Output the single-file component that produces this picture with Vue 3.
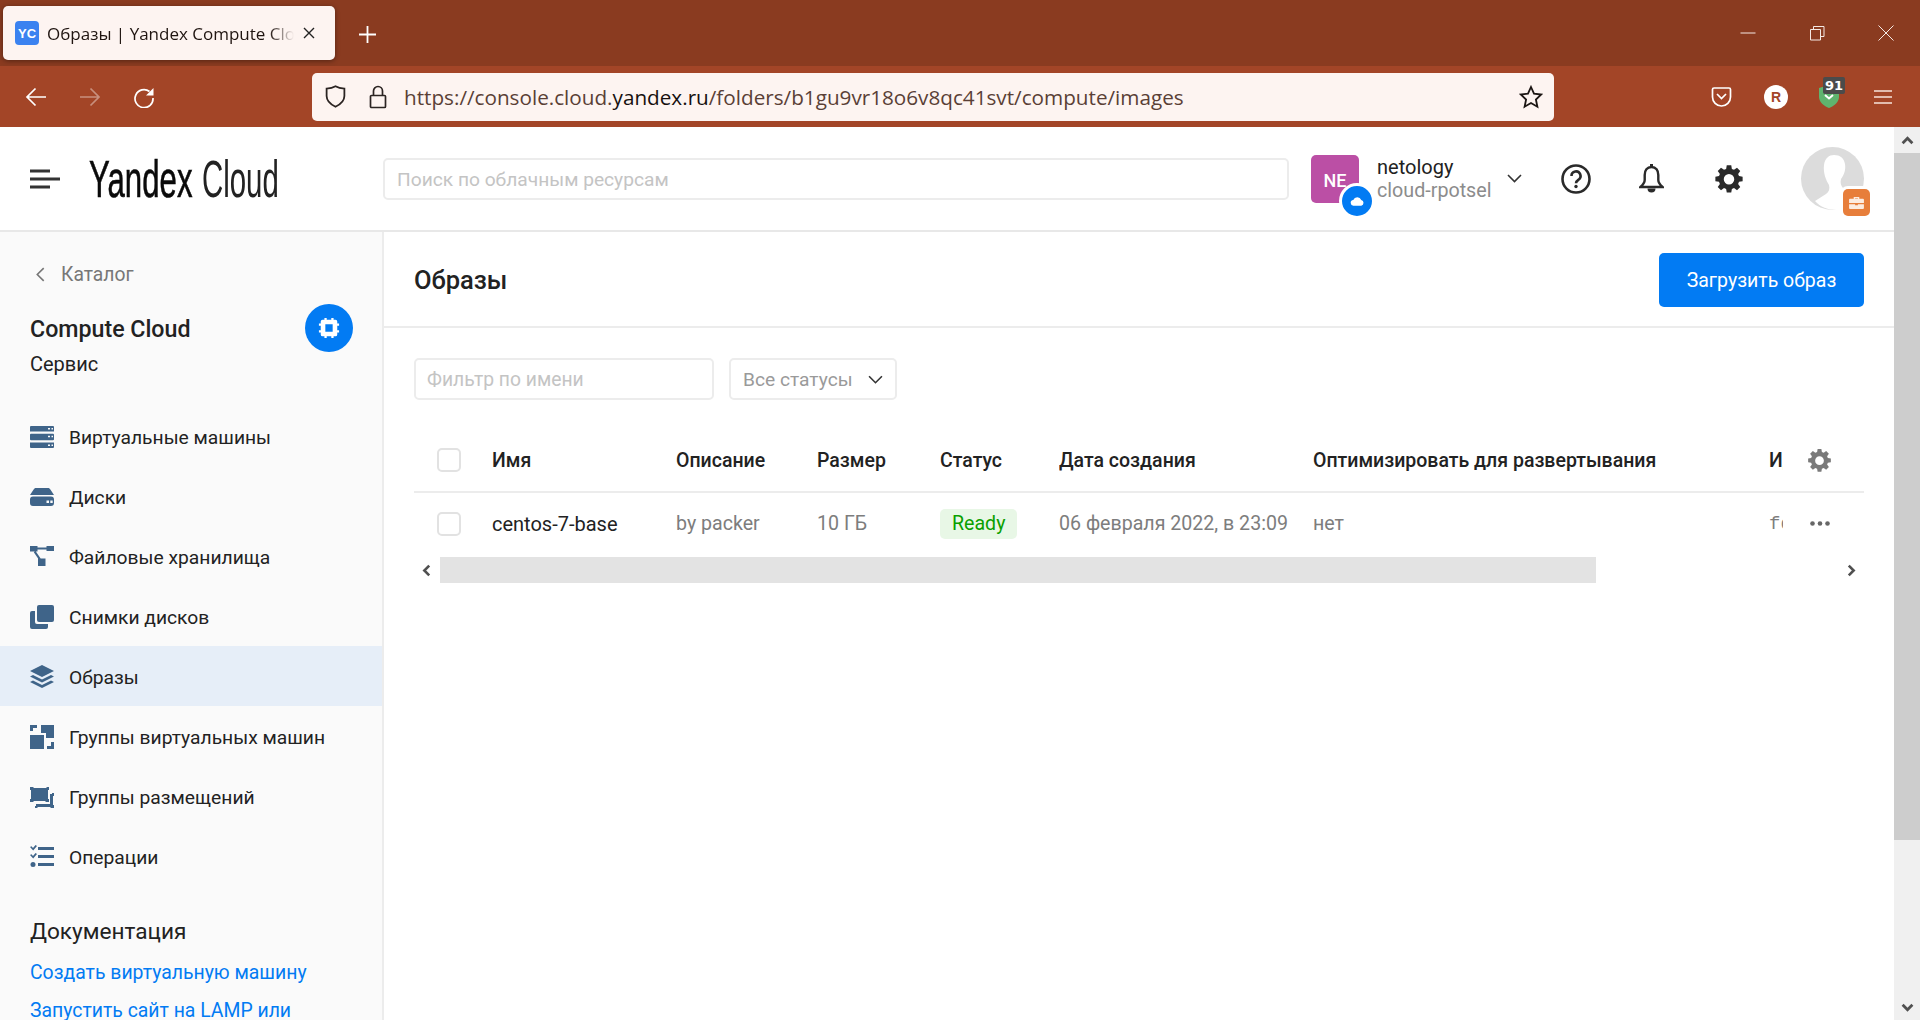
<script setup>
const nav = [
  { label: 'Виртуальные машины', icon: 'vm' },
  { label: 'Диски', icon: 'disk' },
  { label: 'Файловые хранилища', icon: 'fs' },
  { label: 'Снимки дисков', icon: 'snap' },
  { label: 'Образы', icon: 'img', active: true },
  { label: 'Группы виртуальных машин', icon: 'grp' },
  { label: 'Группы размещений', icon: 'plc' },
  { label: 'Операции', icon: 'ops' },
]
const gearPath = 'M10.2 1h3.6l.5 2.9 1.7.7 2.4-1.7 2.6 2.6-1.7 2.4.7 1.7 2.9.5v3.6l-2.9.5-.7 1.7 1.7 2.4-2.6 2.6-2.4-1.7-1.7.7-.5 2.9h-3.6l-.5-2.9-1.7-.7-2.4 1.7-2.6-2.6 1.7-2.4-.7-1.7-2.9-.5v-3.6l2.9-.5.7-1.7-1.7-2.4 2.6-2.6 2.4 1.7 1.7-.7zM12 8a4.2 4.2 0 1 0 0 8.400a4.200 4.200 0 0 0 0-8.400z'
</script>

<template>
  <div class="window">
    <div class="tabbar">
      <div class="tab">
        <span class="favicon">YC</span>
        <span class="tab-title">Образы | Yandex Compute Cloud</span>
        <svg class="tab-x" viewBox="0 0 12 12"><path d="M1 1l10 10M11 1L1 11" /></svg>
      </div>
      <svg class="newtab" viewBox="0 0 16 16"><path d="M8 0v16M0 8h16" /></svg>
      <div class="winctl">
        <svg viewBox="0 0 16 16"><path d="M.5 8h15" /></svg>
        <svg viewBox="0 0 16 16"><path d="M1.500 4.500h10v10.500h-10zM4.500 4.500V1.500h10.500v10h-3.500" /></svg>
        <svg viewBox="0 0 16 16"><path d="M.5.5l15 15M15.500.5l-15 15" /></svg>
      </div>
    </div>

    <div class="toolbar">
      <div class="tool-left">
        <svg viewBox="0 0 22 22"><path d="M21 11H2M10.500 2.500L2 11l8.500 8.500" /></svg>
        <svg class="dim" viewBox="0 0 22 22"><path d="M1 11h19M11.500 2.500L20 11l-8.500 8.500" /></svg>
        <svg viewBox="0 0 22 22"><path d="M16.500 5.500A9 9 0 1 0 20 12" /><path class="solid" d="M20.500 2v7.500H13z" /></svg>
      </div>
      <div class="urlbar">
        <svg class="url-shield" viewBox="0 0 20 22"><path d="M10 1.200c2.500 1.400 5 2 8.500 2.300v7c0 5-3.800 8-8.500 10.300C5.300 18.500 1.500 15.500 1.500 10.500v-7C5 3.200 7.500 2.600 10 1.200z" /></svg>
        <svg class="url-lock" viewBox="0 0 18 24"><path d="M4.500 10V6a4.500 4.500 0 0 1 9 0v4M2.500 10.500h13a1 1 0 0 1 1 1v10a1 1 0 0 1-1 1h-13a1 1 0 0 1-1-1v-10a1 1 0 0 1 1-1z" /></svg>
        <span class="url"><span class="url-dim">https://console.cloud.</span><span class="url-strong">yandex.ru</span><span class="url-dim">/folders/b1gu9vr18o6v8qc41svt/compute/images</span></span>
        <svg class="url-star" viewBox="0 0 24 24"><path d="M12 2l3 6.700 7.200.8-5.300 5 1.500 7.200-6.400-3.700-6.400 3.700 1.500-7.200-5.300-5 7.200-.8z" /></svg>
      </div>
      <div class="tool-right">
        <svg class="pocket" viewBox="0 0 21 22"><path d="M3 2h15a1.500 1.500 0 0 1 1.500 1.500V11a9 9 0 0 1-18 0V3.500A1.500 1.500 0 0 1 3 2zM6 8l4.500 4.500L15 8" /></svg>
        <span class="rbadge">R</span>
        <span class="ublock">
          <svg viewBox="0 0 22 23"><path d="M11 0l10 3v9c0 5-5 9-10 11C6 21 1 17 1 12V3z" fill="#5fb36e" /><path d="M7 10l4 3.500 4-3.500" fill="none" stroke="#fff" stroke-width="2" /></svg>
          <span class="ublock-n">91</span>
        </span>
        <svg class="burger" viewBox="0 0 18 16"><path d="M0 2h18M0 8h18M0 14h18" /></svg>
      </div>
    </div>

    <div class="page">
      <div class="content">
        <header class="topbar">
          <svg class="menu-ic" viewBox="0 0 32 24"><path d="M1 4h20M1 12h30M1 20h20" /></svg>
          <div class="logo"><span class="logo-y">Yandex</span><span class="logo-c">Cloud</span></div>
          <div class="search">Поиск по облачным ресурсам</div>
          <div class="account">
            <div class="ne">NE
              <span class="cloud-badge"><svg viewBox="0 0 16 12"><path d="M4 11a3 3 0 0 1-.5-6A4.600 4.600 0 0 1 12 4.800 3.200 3.200 0 0 1 12 11z" fill="#fff" /></svg></span>
            </div>
            <div class="acc-text"><div class="acc-1">netology</div><div class="acc-2">cloud-rpotsel</div></div>
            <svg class="acc-chev" viewBox="0 0 15 9"><path d="M1 1l6.500 6.500L14 1" /></svg>
          </div>
          <svg class="top-ic help" viewBox="0 0 30 30"><circle cx="15" cy="15" r="13.500" /><path d="M10.500 12a4.500 4.500 0 1 1 6.800 3.800c-1.500 1-2.300 1.800-2.300 3.500" /><circle class="dot" cx="15" cy="22.500" r="1.700" /></svg>
          <svg class="top-ic bell" viewBox="0 0 25 30"><path d="M12.500 3c-4.500 0-6.800 3.500-6.800 8v5c0 3-2 5-4.200 7h22c-2.200-2-4.200-4-4.200-7v-5c0-4.500-2.300-8-6.800-8z" /><path class="fillp" d="M8.500 24.500h8a4 4 0 0 1-8 0zM11 0h3v4h-3z" /></svg>
          <svg class="top-ic gear" viewBox="0 0 24 24"><path :d="gearPath" fill-rule="evenodd" /></svg>
          <div class="avatar">
            <svg viewBox="0 0 63 63"><circle cx="31.500" cy="31.500" r="31.500" fill="#dcdcdc" /><path d="M23 18c1-7 5-10 10-10 6 0 10 3 11 9 1 6-1 11-4 15-1 4 0 7 2 9l5 4c5 3 9 5 12 8-5 6-13 10-23 10-9 0-17-3-22-9l11-7c3-2 4-5 3-9-3-5-6-12-5-20z" fill="#fff" /></svg>
            <span class="case"><svg viewBox="0 0 16 14"><path d="M5 3V1h6v2h4a1 1 0 0 1 1 1v3.500H0V4a1 1 0 0 1 1-1zM6.500 3h3V2.300h-3zM0 8.800h6.500V10h3V8.800H16V13a1 1 0 0 1-1 1H1a1 1 0 0 1-1-1z" fill="#fff" fill-opacity=".85" fill-rule="evenodd" /></svg></span>
          </div>
        </header>

        <div class="body">
          <aside class="side">
            <div class="crumb">
              <svg viewBox="0 0 8 14"><path d="M7 1L1 7l6 6" /></svg>
              <span>Каталог</span>
            </div>
            <div class="svc">
              <div class="svc-text">
                <div class="svc-name">Compute Cloud</div>
                <div class="svc-sub">Сервис</div>
              </div>
              <span class="svc-ic">
                <svg viewBox="0 0 24 24"><path fill="#fff" fill-rule="evenodd" d="M7 1h2.500v2h5V1H17v2h2a2 2 0 0 1 2 2v2h2v2.500h-2v5h2V17h-2v2a2 2 0 0 1-2 2h-2v2h-2.500v-2h-5v2H7v-2H5a2 2 0 0 1-2-2v-2H1v-2.500h2v-5H1V7h2V5a2 2 0 0 1 2-2h2zM8 8v8h8V8z" /></svg>
              </span>
            </div>
            <nav class="nav">
              <a v-for="n in nav" :key="n.label" class="nav-row" :class="{ active: n.active }">
                <svg class="nav-ic" viewBox="0 0 24 24">
                  <g v-if="n.icon === 'vm'"><path fill-rule="evenodd" d="M1 1h22a1 1 0 0 1 1 1v4.500H0V2a1 1 0 0 1 1-1zm17 2v1.500h2V3zm3.500 0v1.500h1.500V3zM1 8.700h22a1 1 0 0 1 1 1v4.600a1 1 0 0 1-1 1H1a1 1 0 0 1-1-1V9.700a1 1 0 0 1 1-1zm17 2v1.500h2v-1.500zm3.500 0v1.500h1.500v-1.500zM0 17.500h24V22a1 1 0 0 1-1 1H1a1 1 0 0 1-1-1zm18 2V21h2v-1.500zm3.500 0V21H23v-1.500z" /></g>
                  <g v-else-if="n.icon === 'disk'"><path fill-rule="evenodd" d="M6 3h12c1 0 1.500.4 2.200 1.200L24 10H0l3.800-5.800C4.500 3.400 5 3 6 3zM3 11.500h18a3 3 0 0 1 3 3V18a3 3 0 0 1-3 3H3a3 3 0 0 1-3-3v-3.500a3 3 0 0 1 3-3zm13.500 4v2.500h2.500v-2.500zm3.800 0v2.500h2.400v-2.500z" /></g>
                  <g v-else-if="n.icon === 'fs'"><path d="M0 1h7.500v5.500H0zM16.500 1H24v5H16.500zM8 13.500h7.500V21H8zM7 2.500h10v2H7zM5.500 6l5.500 8-1.700 1.200-5.500-8z" /></g>
                  <g v-else-if="n.icon === 'snap'"><path d="M9 0h13a2 2 0 0 1 2 2v13a2 2 0 0 1-2 2H9a2 2 0 0 1-2-2V2a2 2 0 0 1 2-2z" /><path d="M2 6h3v11a2 2 0 0 0 2 2h11v3a2 2 0 0 1-2 2H2a2 2 0 0 1-2-2V8a2 2 0 0 1 2-2z" /></g>
                  <g v-else-if="n.icon === 'img'"><path d="M12 0l12 6-12 6L0 6z" /><path d="M3 10l9 4.500L21 10l3 1.500-12 6-12-6z" /><path d="M3 15.500l9 4.500 9-4.500 3 1.500-12 6L0 17z" /></g>
                  <g v-else-if="n.icon === 'grp'"><path d="M0 10h14v14H0zM11 0h13v13h-8V8h-5zM0 0h7v3H3v3H0zM21 17h3v7h-7v-3h4z" /></g>
                  <g v-else-if="n.icon === 'plc'"><path d="M0 2h3l1 1h12l1-1h2v3h-1v9h1v3h-3l-1-1H4l-1 1H0v-3h1V5H0z" /><path d="M20 9h2v-1h2v3h-1v9h1v3h-3l-1-1H8l-1 1H5v-2h1v-2h14z" /></g>
                  <g v-else><path d="M8 2h16v3H8zM8 10h16v3H8zM8 18h16v3H8z" /><path d="M0 2l1.500-.8L3 3l2.500-3L7 1 3.200 5.500zM0 10l1.500-.8L3 11l2.500-3L7 9l-3.800 4.500z" /><circle cx="3" cy="19.500" r="2.500" /></g>
                </svg>
                <span>{{ n.label }}</span>
              </a>
            </nav>
            <div class="docs">
              <div class="docs-h">Документация</div>
              <a class="doc-link">Создать виртуальную машину</a>
              <a class="doc-link">Запустить сайт на LAMP или</a>
            </div>
          </aside>

          <main class="main">
            <div class="main-head">
              <h1>Образы</h1>
              <button class="primary">Загрузить образ</button>
            </div>
            <div class="filters">
              <div class="f-input">Фильтр по имени</div>
              <div class="f-select">Все статусы<svg viewBox="0 0 14 8"><path d="M1 1l6 6 6-6" /></svg></div>
            </div>
            <div class="table">
              <div class="t-row t-head">
                <span class="c c0"><i class="chk"></i></span>
                <span class="c c1">Имя</span>
                <span class="c c2">Описание</span>
                <span class="c c3">Размер</span>
                <span class="c c4">Статус</span>
                <span class="c c5">Дата создания</span>
                <span class="c c6">Оптимизировать для развертывания</span>
                <span class="c c7">Идентификатор</span>
                <span class="c c8"><svg class="t-gear" viewBox="0 0 24 24"><path :d="gearPath" fill-rule="evenodd" /></svg></span>
              </div>
              <div class="t-row t-body">
                <span class="c c0"><i class="chk"></i></span>
                <span class="c c1 name">centos-7-base</span>
                <span class="c c2">by packer</span>
                <span class="c c3">10 ГБ</span>
                <span class="c c4"><b class="ready">Ready</b></span>
                <span class="c c5">06 февраля 2022, в 23:09</span>
                <span class="c c6">нет</span>
                <span class="c c7 mono">fd8abc</span>
                <span class="c c8"><svg class="dots" viewBox="0 0 20 5"><circle cx="2.500" cy="2.500" r="2.300" /><circle cx="10" cy="2.500" r="2.300" /><circle cx="17.500" cy="2.500" r="2.300" /></svg></span>
              </div>
              <div class="hscroll">
                <svg viewBox="0 0 8 12"><path d="M6.500 1.500L2 6l4.500 4.500" /></svg>
                <div class="track"><div class="thumb"></div></div>
                <svg viewBox="0 0 8 12"><path d="M1.500 1.500L6 6l-4.500 4.500" /></svg>
              </div>
            </div>
          </main>
        </div>
      </div>
      <div class="vscroll">
        <div class="vs-btn"><svg viewBox="0 0 12 8"><path d="M1.500 6.500L6 2l4.500 4.500" /></svg></div>
        <div class="vs-thumb"></div>
        <div class="vs-rest"></div>
        <div class="vs-btn"><svg viewBox="0 0 12 8"><path d="M1.500 1.500L6 6l4.500-4.500" /></svg></div>
      </div>
    </div>
  </div>
</template>

<style>
html, body { margin: 0; height: 100%; overflow: hidden; background: #fff; }
</style>

<style scoped>
.window { width: 1920px; height: 1020px; display: flex; flex-direction: column; overflow: hidden; font-family: "Open Sans", "Noto Sans", sans-serif; color: #222; }
svg { display: block; flex: none; }

.tabbar { height: 66px; background: #8a3b20; display: flex; align-items: flex-start; flex: none; }
.tab { width: 332px; height: 54px; margin: 6px 0 0 3px; background: #fdf4f1; border-radius: 5px; box-shadow: 0 1px 5px rgba(0,0,0,.4); display: flex; align-items: center; padding: 0 0 0 12px; box-sizing: border-box; flex: none; }
.favicon { width: 24px; height: 24px; background: #3b82f0; border-radius: 4px; color: #fff; font: 700 13px "Liberation Sans", sans-serif; display: flex; align-items: center; justify-content: center; flex: none; }
.tab-title { margin-left: 8px; width: 247px; overflow: hidden; white-space: nowrap; font-size: 17px; color: #1f1410; flex: none; -webkit-mask-image: linear-gradient(90deg, #000 222px, transparent 247px); mask-image: linear-gradient(90deg, #000 222px, transparent 247px); }
.tab-x { width: 12px; height: 12px; margin-left: 9px; fill: none; stroke: #222; stroke-width: 1.400; }
.newtab { width: 17px; height: 17px; margin: 26px 0 0 24px; fill: none; stroke: #fff; stroke-width: 1.700; }
.winctl { margin-left: auto; display: flex; gap: 53px; padding: 25px 26px 0 0; }
.winctl svg { width: 16px; height: 16px; fill: none; stroke: #f5e9e4; stroke-width: 1; }

.toolbar { height: 61px; background: #a34527; display: flex; align-items: center; flex: none; }
.tool-left { width: 312px; display: flex; align-items: center; gap: 32px; padding-left: 25px; box-sizing: border-box; flex: none; }
.tool-left svg { width: 22px; height: 22px; fill: none; stroke: #fff; stroke-width: 1.700; }
.tool-left svg.dim { opacity: .4; }
.tool-left .solid { fill: #fff; stroke: none; }
.urlbar { width: 1242px; height: 48px; background: #fdf4f1; border-radius: 5px; display: flex; align-items: center; flex: none; box-sizing: border-box; padding: 0 11px 0 13px; }
.url-shield { width: 21px; height: 23px; fill: none; stroke: #2b2422; stroke-width: 1.700; }
.url-lock { width: 18px; height: 24px; margin-left: 23px; fill: none; stroke: #2b2422; stroke-width: 1.700; }
.url { margin-left: 17px; font-size: 20.700px; white-space: nowrap; }
.url-dim { color: #5a3f36; }
.url-strong { color: #16100e; }
.url-star { width: 24px; height: 24px; margin-left: auto; fill: none; stroke: #1c1614; stroke-width: 1.800; }
.tool-right { flex: 1; display: flex; align-items: center; padding-left: 157px; box-sizing: border-box; }
.pocket { width: 21px; height: 22px; fill: none; stroke: #fff; stroke-width: 1.700; }
.rbadge { width: 24px; height: 24px; margin-left: 32px; border-radius: 50%; background: #fff; color: #a34527; font: 700 14px "Liberation Sans", sans-serif; display: flex; align-items: center; justify-content: center; flex: none; }
.ublock { position: relative; width: 22px; height: 23px; margin-left: 30px; flex: none; }
.ublock svg { width: 22px; height: 23px; }
.ublock-n { position: absolute; left: 5px; top: -8px; background: #4b4b4b; color: #fff; font: 700 13px/17px "DejaVu Sans", sans-serif; padding: 0 2px; border-radius: 2px; }
.burger { width: 18px; height: 16px; margin-left: 34px; fill: none; stroke: #f7e3dc; stroke-width: 1.700; }

.page { flex: 1; min-height: 0; display: flex; }
.content { width: 1894px; display: flex; flex-direction: column; flex: none; min-height: 0; font-family: Roboto, "Open Sans", sans-serif; }
.vscroll { width: 26px; flex: none; display: flex; flex-direction: column; }
.vs-btn { height: 26px; background: #f0f0f0; display: flex; align-items: center; justify-content: center; flex: none; }
.vs-btn svg { width: 13px; height: 9px; fill: none; stroke: #505050; stroke-width: 2.600; }
.vs-thumb { height: 687px; background: #cdcdcd; flex: none; }
.vs-rest { flex: 1; background: #f0f0f0; }

.topbar { height: 105px; flex: none; box-sizing: border-box; border-bottom: 2px solid #e8e8e8; display: flex; align-items: center; position: relative; }
.menu-ic { width: 32px; height: 24px; margin-left: 29px; fill: none; stroke: #333; stroke-width: 3; flex: none; }
.logo { margin-left: 28px; width: 194px; font-family: "Liberation Sans", sans-serif; color: #0a0a0a; display: flex; align-items: baseline; white-space: nowrap; flex: none; }
.logo-y { font-size: 52px; display: inline-block; transform: scaleX(.6); transform-origin: left; width: 113px; -webkit-text-stroke: .6px #0a0a0a; }
.logo-c { font-size: 52px; display: inline-block; transform: scaleX(.565); transform-origin: left; color: #222; width: 81px; }
.search { margin-left: 100px; width: 906px; height: 42px; box-sizing: border-box; border: 2px solid #ececec; border-radius: 5px; color: #c4c4c4; font-size: 19.200px; line-height: 40px; padding-left: 12px; flex: none; white-space: nowrap; }
.account { margin-left: 22px; display: flex; align-items: center; flex: none; }
.ne { position: relative; width: 48px; height: 48px; background: #bb4fa5; border-radius: 5px; color: #fff; font-size: 18px; font-weight: 500; text-align: center; line-height: 52px; }
.cloud-badge { position: absolute; right: -16px; bottom: -16px; width: 30px; height: 30px; border: 3px solid #fff; background: #027bf3; border-radius: 50%; display: flex; align-items: center; justify-content: center; }
.cloud-badge svg { width: 15px; height: 12px; }
.acc-text { margin-left: 18px; width: 126px; white-space: nowrap; }
.acc-1 { font-size: 20px; line-height: 24px; color: #222; }
.acc-2 { font-size: 19.700px; line-height: 24px; color: #8c8c8c; }
.acc-chev { width: 15px; height: 9px; margin-left: 4px; fill: none; stroke: #333; stroke-width: 1.600; }
.top-ic { fill: none; stroke: #2a2a2a; flex: none; }
.help { width: 30px; height: 30px; margin-left: 39px; stroke-width: 2.600; }
.help .dot { fill: #2a2a2a; stroke: none; }
.bell { width: 25px; height: 30px; margin-left: 48px; stroke-width: 2.400; }
.bell .fillp { fill: #2a2a2a; stroke: none; }
.gear { width: 30px; height: 30px; margin-left: 50px; fill: #2a2a2a; stroke: none; }
.avatar { position: relative; width: 63px; height: 63px; margin-left: 57px; flex: none; }
.avatar > svg { width: 63px; height: 63px; }
.case { position: absolute; left: 42px; top: 42px; width: 27px; height: 27px; background: #e77e3b; border-radius: 5px; box-shadow: 0 0 0 3px #fff; display: flex; align-items: center; justify-content: center; }
.case svg { width: 15px; height: 13px; }

.body { flex: 1; min-height: 0; display: flex; }
.side { width: 384px; flex: none; box-sizing: border-box; background: #fafafa; border-right: 2px solid #ececec; overflow: hidden; }
.crumb { display: flex; align-items: center; height: 24px; margin: 30px 0 0 36px; color: #777; font-size: 19.300px; }
.crumb svg { width: 9px; height: 15px; fill: none; stroke: #777; stroke-width: 1.500; margin-right: 16px; }
.svc { display: flex; justify-content: space-between; align-items: flex-start; padding: 18px 29px 0 30px; }
.svc-name { font-size: 23.200px; line-height: 30px; font-weight: 500; margin-top: 10px; color: #222; white-space: nowrap; }
.svc-sub { font-size: 20px; line-height: 26px; margin-top: 7px; }
.svc-ic { width: 48px; height: 48px; border-radius: 50%; background: #027bf3; display: flex; align-items: center; justify-content: center; }
.svc-ic svg { width: 22px; height: 22px; }
.nav { margin-top: 29px; }
.nav-row { height: 60px; box-sizing: border-box; padding: 2px 0 0 30px; display: flex; align-items: center; font-size: 19.250px; color: #222; white-space: nowrap; }
.nav-row.active { background: #e6eef8; }
.nav-ic { width: 24px; height: 24px; margin-right: 15px; fill: #3f6489; }
.docs { margin-top: 31px; padding-left: 30px; white-space: nowrap; }
.docs-h { font-size: 22.600px; line-height: 30px; color: #222; }
.doc-link { display: block; color: #027bf3; font-size: 19.400px; line-height: 38px; }
.doc-link:first-of-type { margin-top: 7px; }

.main { flex: 1; min-width: 0; padding-left: 30px; box-sizing: border-box; overflow: hidden; }
.main-head { height: 96px; margin-left: -30px; padding: 2px 30px 0 30px; display: flex; align-items: center; justify-content: space-between; box-sizing: border-box; border-bottom: 2px solid #ececec; }
h1 { margin: 0; font-size: 25.500px; font-weight: 500; color: #222; }
.primary { width: 205px; height: 54px; border: 0; background: #027bf3; color: #fff; border-radius: 5px; font: 19.500px Roboto, sans-serif; }
.filters { display: flex; gap: 15px; margin-top: 30px; }
.f-input { width: 300px; height: 42px; box-sizing: border-box; border: 2px solid #ececec; border-radius: 5px; color: #c4c4c4; font-size: 19.300px; line-height: 39px; padding-left: 11px; }
.f-select { width: 168px; height: 42px; box-sizing: border-box; border: 2px solid #ececec; border-radius: 5px; color: #9a9a9a; font-size: 19.200px; padding: 0 12px; display: flex; align-items: center; justify-content: space-between; }
.f-select svg { width: 15px; height: 9px; fill: none; stroke: #333; stroke-width: 1.500; }
.table { margin-top: 27px; width: 1450px; }
.t-row { display: grid; grid-template-columns: 78px 184px 141px 123px 119px 254px 456px 14px 1fr; align-items: center; }
.t-head { height: 66px; box-sizing: border-box; padding-top: 2px; font-weight: 500; font-size: 19.500px; color: #222; border-bottom: 2px solid #ececec; }
.t-body { height: 64px; box-sizing: border-box; padding-bottom: 3px; font-size: 19.600px; color: #7d7d7d; }
.c { white-space: nowrap; overflow: hidden; display: block; }
.c0 { padding-left: 23px; }
.chk { display: block; width: 24px; height: 24px; box-sizing: border-box; border: 2px solid #e2e2e2; border-radius: 5px; background: #fff; }
.name { color: #222; font-size: 20px; }
.ready { display: inline-block; font-weight: 400; color: #0aa000; background: #e8f7e6; height: 30px; line-height: 30px; padding: 0 12px; border-radius: 5px; }
.mono { font-family: "Liberation Mono", monospace; font-size: 19px; }
.c8 { display: flex; justify-content: center; padding-right: 8px; }
.t-gear { width: 25px; height: 25px; fill: #7a7a7a; }
.dots { width: 20px; height: 5px; fill: #666; }
.hscroll { height: 26px; display: flex; align-items: center; }
.hscroll svg { width: 9px; height: 13px; margin: 0 8px; fill: none; stroke: #505050; stroke-width: 2.400; }
.track { flex: 1; height: 26px; padding-left: 1px; }
.thumb { width: 1156px; height: 26px; background: #e3e3e3; }
</style>
